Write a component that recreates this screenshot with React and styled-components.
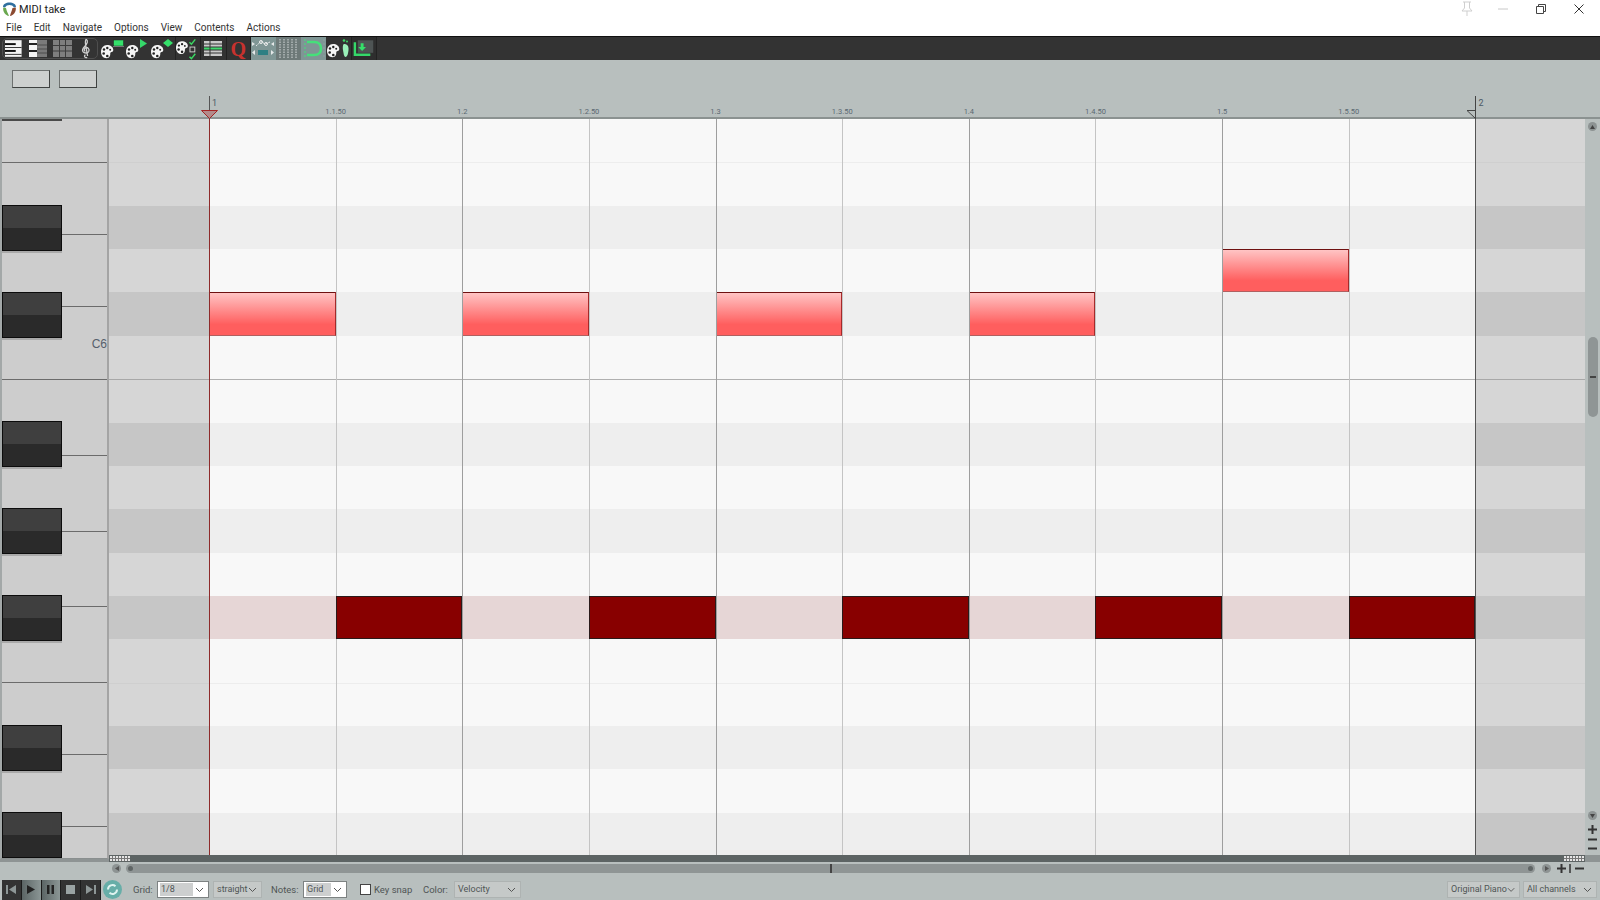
import React from "react";
import styled, { createGlobalStyle } from "styled-components";

const ROW_H = 43.37;
const COL_W = 126.65;

const Global = createGlobalStyle`
  html, body { margin: 0; padding: 0; background: #fff; overflow: hidden; }
  * { box-sizing: border-box; }
`;

const Window = styled.div`
  width: 1600px;
  height: 900px;
  display: flex;
  flex-direction: column;
  overflow: hidden;
  background: #b8bfbe;
  font-family: Roboto, "Liberation Sans", sans-serif;
  & > * { flex: none; }
`;

const TitleBar = styled.div`
  height: 18px;
  background: #fff;
  display: flex;
  align-items: center;
  padding-left: 2px;
`;
const Title = styled.span`
  margin-left: 2px;
  font-size: 11px;
  color: #222;
`;
const WinControls = styled.div`
  margin-left: auto;
  display: flex;
  align-items: center;
  height: 18px;
`;
const WinBtn = styled.div`
  width: ${(p) => p.$w}px;
  height: 16px;
  display: flex;
  justify-content: center;
  align-items: center;
`;

const MenuBar = styled.div`
  height: 18px;
  background: #fff;
  display: flex;
  align-items: center;
  gap: 12px;
  padding: 1px 0 0 6px;
  font-size: 10px;
  color: #333;
`;

const Toolbar = styled.div`
  height: 24px;
  background: #333;
  border-top: 1px solid #111;
  display: flex;
  align-items: stretch;
`;
const ToolGroup = styled.div`
  width: 96px;
  margin: 1px 2px;
  border: 1px solid #4e4e4e;
  border-radius: 5px;
  display: flex;
`;
const Tool = styled.div`
  width: ${(p) => p.$w || 25.15}px;
  display: flex;
  justify-content: center;
  align-items: center;
  flex: none;
  background: ${(p) => p.$bg || "transparent"};
  border-right: ${(p) => (p.$sep ? "1px solid #222" : "none")};
  border-left: ${(p) => (p.$sep ? "1px solid #222" : "none")};
`;
const QGlyph = styled.span`
  font-family: "Liberation Serif", serif;
  font-weight: bold;
  font-size: 20px;
  line-height: 20px;
  color: #c8322e;
`;

const TopPanel = styled.div`
  height: 36px;
  padding: 10px 0 0 12px;
  display: flex;
  gap: 9px;
`;
const PanelBtn = styled.div`
  width: 38px;
  height: 18px;
  background: #cdd0cf;
  border: 1px solid #6d7170;
  border-right-color: #3f4241;
  border-bottom-color: #3f4241;
`;

const Ruler = styled.div`
  height: 23px;
  position: relative;
  display: flex;
  padding-left: 209px;
  border-bottom: 2px solid #8b9291;
`;
const RulerCell = styled.div`
  width: ${COL_W}px;
  flex: none;
  position: relative;
`;
const RulerLabel = styled.span`
  position: absolute;
  top: 11px;
  left: 0;
  transform: translateX(-50%);
  font-size: 7.5px;
  line-height: 9px;
  color: #5a6872;
  white-space: nowrap;
`;
const BarMark = styled.div`
  position: absolute;
  top: 0;
  left: 0;
  width: 1px;
  height: 23px;
  background: ${(p) => p.$color};
`;
const BarLabel = styled.span`
  position: absolute;
  top: 2px;
  left: 3px;
  font-size: 9px;
  line-height: 11px;
  color: #4c5a66;
`;
const MarkerIcon = styled.svg`
  position: absolute;
  top: 14px;
  left: ${(p) => p.$left}px;
`;

const Editor = styled.div`
  height: 736px;
  display: flex;
`;

const Piano = styled.div`
  width: 109px;
  height: 740px;
  flex: none;
  position: relative;
  z-index: 1;
  overflow: hidden;
  display: flex;
  flex-direction: column;
  background: #cdcdcd;
  border-left: 2px solid #a3a8a8;
  border-right: 2px solid #a4a4a4;
  border-bottom: 1.5px solid #8a8f8f;
`;
const WhiteKey = styled.div`
  height: ${(p) => p.$h}px;
  flex: none;
  border-bottom: ${(p) => (p.$last ? "none" : "1.5px solid #6b6b6b")};
  position: relative;
`;
const KeyName = styled.span`
  position: absolute;
  right: 0;
  top: 30px;
  font-family: "Liberation Sans", sans-serif;
  font-size: 12px;
  line-height: 14px;
  color: #56606c;
`;
const BlackKey = styled.div`
  position: absolute;
  left: 0;
  top: ${(p) => p.$top}px;
  width: 60px;
  height: 46px;
  border: 1px solid #0c0c0c;
  background: linear-gradient(#3f3f3f 0 50%, #2a2a2a 50% 100%);
  box-shadow: 0 2px 0 #a9a9a9;
`;
const KeyStub = styled.div`
  position: absolute;
  left: 0;
  top: 0;
  width: 60px;
  height: 2px;
  background: #4a4a4a;
`;

const Roll = styled.div`
  display: grid;
  grid-template-columns: 100px repeat(10, ${COL_W}px) 109.5px;
  grid-template-rows: repeat(17, ${ROW_H}px);
  flex: none;
  height: 736px;
  overflow: hidden;
`;
const LaneCell = styled.div`
  grid-row: ${(p) => p.$row};
  grid-column: ${(p) => p.$col};
  background: ${(p) => (p.$dark ? "#c6c6c6" : "#d6d6d6")};
  border-top: ${(p) => (p.$line ? `1px solid ${p.$line}` : "none")};
`;
const RowBand = styled.div`
  grid-row: ${(p) => p.$row};
  grid-column: 2 / 12;
  background: ${(p) => (p.$active ? "#e6d6d6" : p.$dark ? "#eeeeee" : "#f8f8f8")};
  border-top: ${(p) => (p.$line ? `1px solid ${p.$line}` : "none")};
`;
const GridLine = styled.div`
  grid-row: 1 / -1;
  grid-column: ${(p) => p.$col};
  border-left: 1px solid ${(p) => p.$color};
  z-index: 1;
`;
const Note = styled.div`
  grid-row: ${(p) => p.$row};
  grid-column: ${(p) => p.$col};
  z-index: 2;
  margin-left: 1px;
  background: linear-gradient(#ffc4c4, #ff5e5e 75%);
  border-top: 1px solid #6e1010;
  border-right: 1px solid #a52a2a;
  border-bottom: 1px solid #b06060;
`;
const DarkNote = styled.div`
  grid-row: ${(p) => p.$row};
  grid-column: ${(p) => p.$col};
  z-index: 2;
  background: #880000;
  border: 1px solid #2a1a1a;
`;

const VScroll = styled.div`
  width: 15px;
  flex: none;
  display: flex;
  flex-direction: column;
  align-items: center;
  padding-top: 3px;
  padding-left: 1px;
`;
const RoundBtn = styled.div`
  width: 9px;
  height: 9px;
  border-radius: 50%;
  background: #8d9393;
  flex: none;
  display: flex;
  justify-content: center;
  align-items: center;
  margin-top: ${(p) => p.$mt || 0}px;
  margin-left: ${(p) => p.$ml || 0}px;
`;
const VThumb = styled.div`
  width: 10px;
  height: 80px;
  flex: none;
  margin-top: 206px;
  border-radius: 5px;
  background: #8f9595;
  display: flex;
  align-items: center;
  justify-content: center;
`;
const VGrip = styled.div`
  width: 6px;
  height: 2px;
  background: #444;
`;
const ZoomIcon = styled.svg`
  flex: none;
  margin-top: ${(p) => p.$mt || 0}px;
  margin-left: ${(p) => p.$ml || 0}px;
`;

const HStrip = styled.div`
  height: 7px;
  display: flex;
  background: #8e9494;
`;
const StripFill = styled.div`
  width: 1476px;
  margin-left: 109px;
  background: #5d6464;
  position: relative;
`;
const Dots = styled.div`
  position: absolute;
  top: 1px;
  ${(p) => (p.$right ? "right: 1px;" : "left: 1px;")}
  width: 20px;
  height: 5px;
  background:
    linear-gradient(#0000 0 2px, #777 2px 3px, #0000 3px),
    repeating-linear-gradient(90deg, #e6e6e6 0 2px, #777 2px 3px);
`;

const HScroll = styled.div`
  height: 16px;
  padding: 2px 0 0 112px;
  display: flex;
  align-items: flex-start;
`;
const HTrack = styled.div`
  width: 1409px;
  height: 9px;
  margin-left: 5px;
  border-radius: 5px;
  background: #8f9595;
  display: flex;
  align-items: center;
  justify-content: space-between;
  padding: 0 2px;
  position: relative;
`;
const HDot = styled.div`
  width: 5px;
  height: 5px;
  border-radius: 50%;
  background: #5f6565;
`;
const HGrip = styled.div`
  position: absolute;
  left: 704px;
  top: 0;
  width: 2px;
  height: 9px;
  background: #444;
`;

const BottomBar = styled.div`
  height: 23px;
  display: flex;
  align-items: center;
  font-size: 9.5px;
  color: #4f5555;
`;
const Transport = styled.div`
  width: 99px;
  height: 20px;
  margin-left: 2px;
  display: flex;
  background: #2f2f2f;
  flex: none;
`;
const TransportBtn = styled.div`
  flex: 1;
  display: flex;
  justify-content: center;
  align-items: center;
  background: ${(p) => (p.$lit ? "linear-gradient(90deg, #5b6565, #8b9695)" : "#333")};
  border-right: 1px solid #1c1c1c;
`;
const LoopBtn = styled.div`
  width: 19px;
  height: 19px;
  margin-left: 2px;
  flex: none;
  border-radius: 50%;
  background: #67aea8;
  display: flex;
  justify-content: center;
  align-items: center;
`;
const Label = styled.span`
  width: ${(p) => p.$w}px;
  margin-left: ${(p) => p.$ml}px;
  white-space: nowrap;
  flex: none;
`;
const Combo = styled.div`
  width: ${(p) => p.$w}px;
  height: 17px;
  margin-left: ${(p) => p.$ml}px;
  flex: none;
  display: flex;
  align-items: center;
  justify-content: space-between;
  padding: 1px 4px 1px 2px;
  font-size: 9px;
  background: ${(p) => (p.$white ? "#fff" : "#c5c9c8")};
  border: 1px solid ${(p) => (p.$white ? "#7d8282" : "#aeb3b2")};
  color: #4f5555;
`;
const ComboText = styled.span`
  background: ${(p) => (p.$sel ? "#cdcfcf" : "transparent")};
  width: ${(p) => (p.$sel ? `${p.$sel}px` : "auto")};
  height: 13px;
  line-height: 12px;
  padding-left: 1px;
  white-space: nowrap;
`;
const CheckBox = styled.div`
  width: 11px;
  height: 11px;
  margin-left: 13px;
  flex: none;
  background: #fff;
  border: 1px solid #444;
`;
const RightCombos = styled.div`
  margin-left: auto;
  margin-right: 3px;
  display: flex;
`;

const Chevron = () => (
  <svg width="9" height="6" viewBox="0 0 9 6">
    <path d="M1 1l3.5 3.5L8 1" fill="none" stroke="#555" strokeWidth="1" />
  </svg>
);

const ReaperLogo = () => (
  <svg width="15" height="16" viewBox="0 0 15 16">
    <path d="M1 6C1 3 4 1.5 7.5 1.5S14 3 14 6l-2 .6C11 4.800 9.500 4 7.500 4S4 4.800 3 6.600z" fill="#2f6f9f" />
    <path d="M1.200 6.500L4 7c.6 3 2 5.500 3 8-3.500-.6-6.300-4-5.800-8.500z" fill="#6aa84f" />
    <path d="M13.800 6.500L10.500 7C9.800 10 8.500 12.500 8 15c3.500-.6 6.300-4 5.800-8.500z" fill="#8c4a32" />
    <circle cx="7.500" cy="6.500" r="1.700" fill="#fff" />
  </svg>
);

const Palette = ({ x = 0, y = 8 }) => (
  <g transform={`translate(${x} ${y})`}>
    <path d="M6 0c3.500 0 6.300 2 6.300 5 0 1.800-1.400 2.100-2.400 2.300C9 7.600 9.400 9 9.200 10c-.3 2-1.700 3.300-3.800 3.300C2.300 13.300 0 10.500 0 6.800 0 3 2.500 0 6 0z" fill="#f5f5f5" />
    <circle cx="3" cy="4.500" r="1.200" fill="#222" />
    <circle cx="6.300" cy="3" r="1.200" fill="#222" />
    <circle cx="2.700" cy="8.500" r="1.300" fill="#222" />
    <circle cx="6.300" cy="11" r="1.300" fill="#222" />
    <circle cx="9.200" cy="4.800" r="1" fill="#222" />
  </g>
);

const Icon = ({ children }) => (
  <svg width="24" height="23" viewBox="0 0 24 23">{children}</svg>
);

const KeysIcon = () => (
  <Icon>
    <rect x="2" y="3" width="17" height="17" fill="#f4f4f4" />
    <rect x="2" y="6" width="11" height="2" fill="#111" />
    <rect x="2" y="10" width="17" height="1" fill="#333" />
    <rect x="2" y="13" width="11" height="2" fill="#111" />
    <rect x="2" y="17" width="17" height="1" fill="#333" />
  </Icon>
);
const SplitKeysIcon = () => (
  <Icon>
    <rect x="2" y="3" width="8" height="17" fill="#f4f4f4" />
    <rect x="2" y="6" width="8" height="2" fill="#222" />
    <rect x="2" y="13" width="8" height="2" fill="#222" />
    <rect x="10" y="3" width="10" height="17" fill="#7a7a7a" />
    <path d="M10 8h10M10 12h10M10 16h10" stroke="#4c4c4c" />
  </Icon>
);
const MatrixIcon = () => (
  <Icon>
    <rect x="2" y="3" width="19" height="17" fill="#7e7e7e" />
    <path d="M8.500 3v17M14.500 3v17M2 8.500h19M2 14h19" stroke="#3c3c3c" />
  </Icon>
);
const ClefIcon = () => (
  <Icon>
    <path
      d="M13 21c-2.500 1-4-2-1.800-2.700 M12 1.500c2.300 2 1.200 5-1.500 7.500-2.500 2.300-3 4-2 5.800 1.300 2 5.400 2.100 6.300-.5.700-2.300-1.200-4.300-3.200-3.800-2 .5-2.300 3.200-.6 4 M12 1.500c-1 1-1.200 3-.6 6.500l2 11.500"
      fill="none"
      stroke="#cfcfcf"
      strokeWidth="1.400"
    />
  </Icon>
);
const PaletteSquareIcon = () => (
  <Icon>
    <Palette />
    <rect x="12.500" y="3" width="10" height="6" fill="#35e06a" stroke="#222" strokeWidth=".5" />
    <path d="M12 9.500h11" stroke="#777" />
  </Icon>
);
const PaletteTriIcon = () => (
  <Icon>
    <Palette />
    <path d="M14 2l7 4.500-7 4.500z" fill="#35d86a" />
  </Icon>
);
const PaletteDiamondIcon = () => (
  <Icon>
    <Palette />
    <path d="M17 2l5 4-5 4-5-4z" fill="#35e06a" />
  </Icon>
);
const PaletteCheckIcon = () => (
  <Icon>
    <Palette x={0} y={4} />
    <path d="M14 5l2 2 4-5M14 20l2 2 4-5" fill="none" stroke="#3bd863" strokeWidth="1.500" />
    <rect x="14.500" y="10" width="5" height="5" fill="none" stroke="#ccc" />
  </Icon>
);
const ListIcon = () => (
  <Icon>
    <rect x="3" y="4" width="18" height="15" fill="#c9c9c9" />
    <rect x="3" y="10" width="18" height="3" fill="#3fd86c" />
    <path d="M3 7h18M3 10h18M3 13h18M3 16h18" stroke="#333" />
    <path d="M9 4v15" stroke="#333" />
  </Icon>
);
const EnvelopeIcon = () => (
  <Icon>
    <path d="M5 9l5-4.500 4 2.500 5-2" fill="none" stroke="#e4e8e8" strokeDasharray="2 1" />
    <circle cx="10" cy="5" r="1.500" fill="none" stroke="#eee" />
    <circle cx="15" cy="7" r="1.500" fill="none" stroke="#eee" />
    <rect x="7" y="13" width="10" height="5" fill="#2e7f83" />
    <path d="M1 5l3 2-3 2zM23 5l-3 2 3 2zM4 13l-3 2.500 3 2.500zM20 13l3 2.500-3 2.500z" fill="#e4e8e8" />
  </Icon>
);
const GridIcon = () => (
  <Icon>
    <path d="M3 2v19M7 2v19M11 2v19M15 2v19M19 2v19" stroke="#d5dada" strokeDasharray="1.500 1" strokeWidth="1" />
  </Icon>
);
const SnapIcon = () => (
  <Icon>
    <path d="M5 5h7c5 0 7 3 7 6.500S17 18 12 18H5" fill="none" stroke="#45e07a" strokeWidth="2.500" />
    <path d="M3 2v19" stroke="#45e07a" strokeDasharray="2 2" />
    <path d="M22 2v19" stroke="#8fa09f" strokeDasharray="2 2" />
  </Icon>
);
const FootIcon = () => (
  <Icon>
    <Palette x={0} y={7} />
    <path d="M17 7c3 0 5 2 4.500 6-.3 3-1 7-3 7-1.500 0-2-4-2.500-7-.4-3 0-6 1-6z" fill="#9af0b8" />
    <circle cx="17" cy="3.500" r="1.300" fill="#3bd863" />
    <circle cx="20" cy="4.500" r="1" fill="#3bd863" />
  </Icon>
);
const DownloadIcon = () => (
  <Icon>
    <rect x="6" y="3" width="16" height="13" fill="#4e5454" />
    <path d="M3 5v13h16" fill="none" stroke="#35d86a" strokeWidth="2.500" />
    <path d="M9 6h3v4h2.500l-4 4-4-4H9z" fill="#35e06a" />
  </Icon>
);

const Tri = ({ up }) => (
  <svg width="5" height="4" viewBox="0 0 5 4">
    <path d={up ? "M2.500 0L5 4H0z" : "M0 0h5L2.500 4z"} fill="#444" />
  </svg>
);
const Side = ({ right }) => (
  <svg width="4" height="5" viewBox="0 0 4 5">
    <path d={right ? "M0 0l4 2.500L0 5z" : "M4 0L0 2.500 4 5z"} fill="#555" />
  </svg>
);

const Plus = ({ mt, ml }) => (
  <ZoomIcon $mt={mt} $ml={ml} width="9" height="9" viewBox="0 0 9 9">
    <path d="M0 4.500h9M4.500 0v9" stroke="#333" strokeWidth="2" />
  </ZoomIcon>
);
const Minus = ({ mt, ml, w = 9 }) => (
  <ZoomIcon $mt={mt} $ml={ml} width={w} height="3" viewBox={`0 0 ${w} 3`}>
    <path d={`M0 1.500h${w}`} stroke="#333" strokeWidth="2" />
  </ZoomIcon>
);

// piano roll data: rows counted from the top of the view
const darkRows = [2, 4, 7, 9, 11, 14, 16];
const rows = Array.from({ length: 17 }, (_, i) => i);
const rowLine = { 1: "#ededed", 6: "#b0b0b0", 13: "#ededed" };
const laneLine = { 1: "#cfcfcf", 6: "#a8a8a8", 13: "#cfcfcf" };

const rulerLabels = ["", "1.1.50", "1.2", "1.2.50", "1.3", "1.3.50", "1.4", "1.4.50", "1.5", "1.5.50"];
const whiteKeys = [44, 72, 72, 73, 76, 76, 75, 76, 72, 72, 32];
const blackKeyTops = [86, 173, 302, 389, 476, 606, 693];
const pinkNotes = [[5, 2], [5, 4], [5, 6], [5, 8], [4, 10]];
const darkNotes = [3, 5, 7, 9, 11];

export default function App() {
  return (
    <Window>
      <Global />
      <TitleBar>
        <ReaperLogo />
        <Title>MIDI take</Title>
        <WinControls>
          <WinBtn $w={34}>
            <svg width="16" height="16" viewBox="0 0 16 16">
              <path d="M4 1h8M5.500 1v6L3 10h10l-2.500-3V1M8 10v5" fill="none" stroke="#cfcfcf" />
            </svg>
          </WinBtn>
          <WinBtn $w={38}>
            <svg width="10" height="2" viewBox="0 0 10 2">
              <path d="M0 1h10" stroke="#c8c8c8" />
            </svg>
          </WinBtn>
          <WinBtn $w={38}>
            <svg width="10" height="10" viewBox="0 0 10 10">
              <path d="M.5 2.500h7v7h-7zM2.500 2.500v-2h7v7h-2" fill="none" stroke="#444" />
            </svg>
          </WinBtn>
          <WinBtn $w={38}>
            <svg width="10" height="10" viewBox="0 0 10 10">
              <path d="M.5.500l9 9M9.500.500l-9 9" fill="none" stroke="#333" />
            </svg>
          </WinBtn>
          <WinBtn $w={2} />
        </WinControls>
      </TitleBar>
      <MenuBar>
        <span>File</span>
        <span>Edit</span>
        <span>Navigate</span>
        <span>Options</span>
        <span>View</span>
        <span>Contents</span>
        <span>Actions</span>
      </MenuBar>
      <Toolbar>
        <ToolGroup>
          <Tool $w={23.5}><KeysIcon /></Tool>
          <Tool $w={24}><SplitKeysIcon /></Tool>
          <Tool $w={24}><MatrixIcon /></Tool>
          <Tool $w={22.5}><ClefIcon /></Tool>
        </ToolGroup>
        <Tool><PaletteSquareIcon /></Tool>
        <Tool><PaletteTriIcon /></Tool>
        <Tool><PaletteDiamondIcon /></Tool>
        <Tool $sep><PaletteCheckIcon /></Tool>
        <Tool><ListIcon /></Tool>
        <Tool $sep><QGlyph>Q</QGlyph></Tool>
        <Tool $bg="#7f9695"><EnvelopeIcon /></Tool>
        <Tool $bg="#6d7978"><GridIcon /></Tool>
        <Tool $bg="#7f9695"><SnapIcon /></Tool>
        <Tool><FootIcon /></Tool>
        <Tool $sep $bg="#2e2e2e"><DownloadIcon /></Tool>
      </Toolbar>
      <TopPanel>
        <PanelBtn />
        <PanelBtn />
      </TopPanel>
      <Ruler>
        {rulerLabels.map((text, i) => (
          <RulerCell key={i}>
            {i === 0 ? (
              <>
                <BarMark $color="#555" />
                <BarLabel>1</BarLabel>
                <MarkerIcon $left={-8} width="17" height="9" viewBox="0 0 17 9">
                  <path d="M.5.500h16L8.500 8.500z" fill="#b38a8a" stroke="#a32424" />
                </MarkerIcon>
              </>
            ) : (
              <RulerLabel>{text}</RulerLabel>
            )}
          </RulerCell>
        ))}
        <RulerCell>
          <BarMark $color="#444" />
          <BarLabel>2</BarLabel>
          <MarkerIcon $left={-8} width="9" height="9" viewBox="0 0 9 9">
            <path d="M0 .500h8.500v8z" fill="none" stroke="#444" />
          </MarkerIcon>
        </RulerCell>
      </Ruler>
      <Editor>
        <Piano>
          {whiteKeys.map((h, i) => (
            <WhiteKey key={i} $h={h} $last={i === whiteKeys.length - 1}>
              {i === 3 && <KeyName>C6</KeyName>}
            </WhiteKey>
          ))}
          <KeyStub />
          {blackKeyTops.map((top) => (
            <BlackKey key={top} $top={top} />
          ))}
        </Piano>
        <Roll>
          {rows.map((i) => {
            const dark = darkRows.includes(i);
            return (
              <React.Fragment key={i}>
                <LaneCell $row={i + 1} $col={1} $dark={dark} $line={laneLine[i]} />
                <RowBand $row={i + 1} $dark={dark} $active={i === 11} $line={rowLine[i]} />
                <LaneCell $row={i + 1} $col={12} $dark={dark} $line={laneLine[i]} />
              </React.Fragment>
            );
          })}
          <GridLine $col={2} $color="#8e2a2a" />
          {[3, 4, 5, 6, 7, 8, 9, 10, 11].map((c) => (
            <GridLine key={c} $col={c} $color={c % 2 === 0 ? "#9e9e9e" : "#c4c4c4"} />
          ))}
          <GridLine $col={12} $color="#555" />
          {pinkNotes.map(([r, c]) => (
            <Note key={c} $row={r} $col={c} />
          ))}
          {darkNotes.map((c) => (
            <DarkNote key={c} $row={12} $col={c} />
          ))}
        </Roll>
        <VScroll>
          <RoundBtn><Tri up /></RoundBtn>
          <VThumb><VGrip /></VThumb>
          <RoundBtn $mt={394}><Tri /></RoundBtn>
          <Plus mt={5} />
          <Minus mt={4} />
          <Minus mt={6} />
        </VScroll>
      </Editor>
      <HStrip>
        <StripFill>
          <Dots />
          <Dots $right />
        </StripFill>
      </HStrip>
      <HScroll>
        <RoundBtn><Side /></RoundBtn>
        <HTrack>
          <HDot />
          <HGrip />
          <HDot />
        </HTrack>
        <RoundBtn $ml={7}><Side right /></RoundBtn>
        <Plus ml={6} />
        <ZoomIcon $ml={3} width="2" height="9" viewBox="0 0 2 9">
          <path d="M1 0v9" stroke="#333" strokeWidth="1.5" />
        </ZoomIcon>
        <ZoomIcon $mt={3} $ml={4} width="9" height="3" viewBox="0 0 9 3">
          <path d="M0 1.500h9" stroke="#333" strokeWidth="2" />
        </ZoomIcon>
      </HScroll>
      <BottomBar>
        <Transport>
          <TransportBtn>
            <svg width="10" height="9" viewBox="0 0 10 9"><path d="M0 0h2v9H0zM10 0v9L3 4.500z" fill="#8d9696" /></svg>
          </TransportBtn>
          <TransportBtn $lit>
            <svg width="8" height="9" viewBox="0 0 8 9"><path d="M0 0l8 4.500L0 9z" fill="#222" /></svg>
          </TransportBtn>
          <TransportBtn $lit>
            <svg width="7" height="9" viewBox="0 0 7 9"><path d="M0 0h2.500v9H0zM4.500 0H7v9H4.500z" fill="#222" /></svg>
          </TransportBtn>
          <TransportBtn>
            <svg width="9" height="9" viewBox="0 0 9 9"><rect width="9" height="9" fill="#9aa3a3" /></svg>
          </TransportBtn>
          <TransportBtn>
            <svg width="10" height="9" viewBox="0 0 10 9"><path d="M0 0l7 4.500L0 9zM8 0h2v9H8z" fill="#8d9696" /></svg>
          </TransportBtn>
        </Transport>
        <LoopBtn>
          <svg width="13" height="13" viewBox="0 0 13 13">
            <path d="M2 6.500a4.500 4.500 0 0 1 7.500-3.300M11 6.500a4.500 4.500 0 0 1-7.500 3.300" fill="none" stroke="#dff3f0" strokeWidth="2" />
          </svg>
        </LoopBtn>
        <Label $w={18} $ml={11}>Grid:</Label>
        <Combo $white $w={52} $ml={6}>
          <ComboText $sel={33}>1/8</ComboText>
          <Chevron />
        </Combo>
        <Combo $w={49} $ml={4}>
          <ComboText>straight</ComboText>
          <Chevron />
        </Combo>
        <Label $w={25} $ml={9}>Notes:</Label>
        <Combo $white $w={44} $ml={7}>
          <ComboText $sel={25}>Grid</ComboText>
          <Chevron />
        </Combo>
        <CheckBox />
        <Label $w={37} $ml={3}>Key snap</Label>
        <Label $w={24} $ml={12}>Color:</Label>
        <Combo $w={67} $ml={7}>
          <ComboText>Velocity</ComboText>
          <Chevron />
        </Combo>
        <RightCombos>
          <Combo $w={73} $ml={0}>
            <ComboText>Original Piano</ComboText>
            <Chevron />
          </Combo>
          <Combo $w={74} $ml={3}>
            <ComboText>All channels</ComboText>
            <Chevron />
          </Combo>
        </RightCombos>
      </BottomBar>
    </Window>
  );
}
